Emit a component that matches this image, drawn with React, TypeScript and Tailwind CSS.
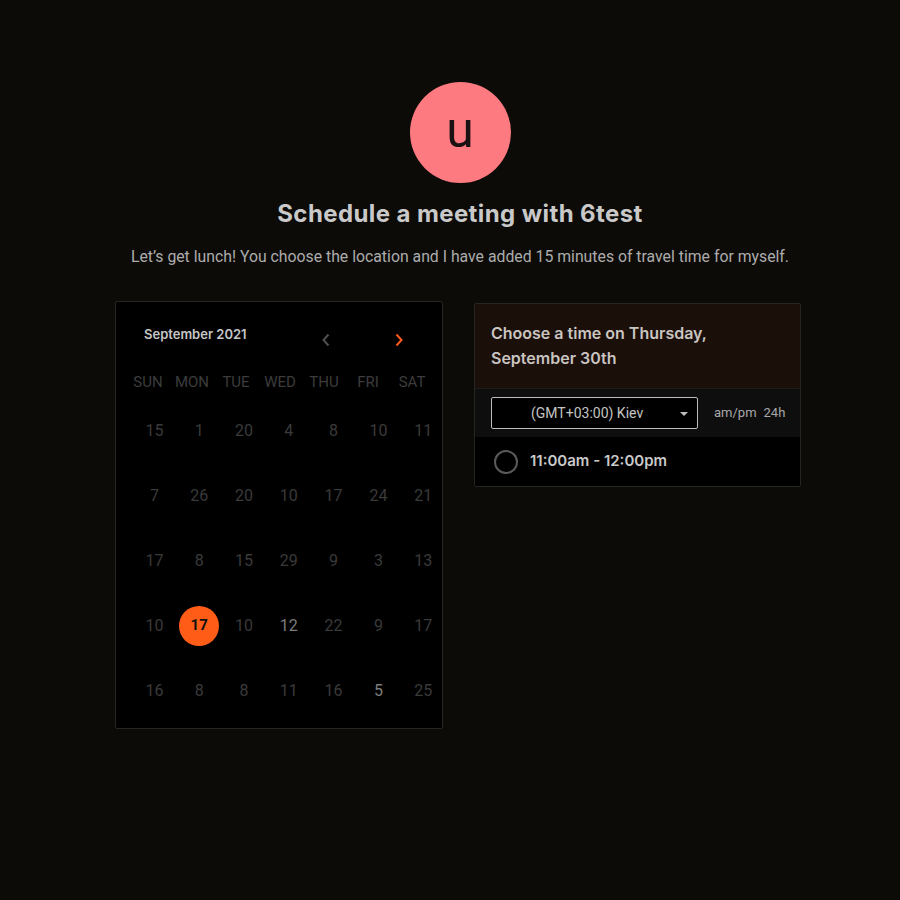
import React from "react";

const headers = ["SUN", "MON", "TUE", "WED", "THU", "FRI", "SAT"];
const rows: (number | string)[][] = [
  [15, 1, 20, 4, 8, 10, 11],
  [7, 26, 20, 10, 17, 24, 21],
  [17, 8, 15, 29, 9, 3, 13],
  [10, 17, 10, 12, 22, 9, 17],
  [16, 8, 8, 11, 16, 5, 25],
];

export default function App() {
  return (
    <div
      className="min-h-[900px] w-full bg-[#0c0b08] flex flex-col items-center pt-[82px] pl-[20px]"
      style={{ fontFamily: "Roboto, 'Liberation Sans', sans-serif" }}
    >
      <div className="w-[101px] h-[101px] rounded-full bg-[#fd7a80] flex items-center justify-center">
        <span className="text-[50px] leading-none text-[#1a1212] pb-[6px]" style={{ fontFamily: "Roboto, sans-serif" }}>u</span>
      </div>
      <h1
        className="mt-[17px] text-[24px] leading-[28px] font-bold text-[#c9c9c9] tracking-[0.4px]"
        style={{ fontFamily: "Inter, 'Liberation Sans', sans-serif" }}
      >
        Schedule a meeting with 6test
      </h1>
      <p className="mt-[18px] text-[15.8px] leading-[22px] text-[#acacac]">
        Let’s get lunch! You choose the location and I have added 15 minutes of travel time for myself.
      </p>

      <div className="mt-[33px] flex items-start gap-[31px] pr-[4px]">
        {/* Calendar */}
        <div className="w-[328px] h-[428px] bg-black border border-[#262522] rounded-[2px] pt-[23px]">
          <div className="flex items-center h-[20px] pl-[28px]">
            <span
              className="text-[13px] font-semibold text-[#c6c6c6] w-[170px]"
              style={{ fontFamily: "Inter, 'Liberation Sans', sans-serif" }}
            >
              September 2021
            </span>
            <svg width="10" height="14" viewBox="0 0 10 14" className="ml-[7px] mt-[10px]">
              <path d="M7.5 1.5 L2.5 7 L7.5 12.5" fill="none" stroke="#4e4e4e" strokeWidth="2" />
            </svg>
            <svg width="10" height="14" viewBox="0 0 10 14" className="ml-[63px] mt-[10px]">
              <path d="M2.5 1.5 L7.5 7 L2.5 12.5" fill="none" stroke="#ff5a1f" strokeWidth="2" />
            </svg>
          </div>
          <div className="grid grid-cols-[repeat(7,44px)] ml-[10px] mt-[26px] h-[20px] items-center">
            {headers.map((h) => (
              <div key={h} className="text-center text-[15px] text-[#3c3c3c]">
                {h}
              </div>
            ))}
          </div>
          <div className="ml-[16px] mt-[7px] w-[314px]">
            {rows.map((r, ri) => (
              <div key={ri} className="grid grid-cols-[repeat(7,44.8px)] h-[65px] items-center">
                {r.map((d, ci) => {
                  const selected = ri === 3 && ci === 1;
                  const bright = (ri === 3 && ci === 3) || (ri === 4 && ci === 5);
                  return (
                    <div key={ci} className="flex items-center justify-center">
                      {selected ? (
                        <div className="w-[40px] h-[40px] rounded-full bg-[#ff5c17] flex items-center justify-center text-[15px] font-bold text-[#111]">
                          {d}
                        </div>
                      ) : (
                        <span
                          className={
                            bright
                              ? "text-[16px] text-[#7c7c7c]"
                              : "text-[16px] text-[#3a3a3a]"
                          }
                        >
                          {d}
                        </span>
                      )}
                    </div>
                  );
                })}
              </div>
            ))}
          </div>
        </div>

        {/* Time panel */}
        <div className="w-[327px] mt-[2px] border border-[#262522] rounded-[2px] overflow-hidden bg-black">
          <div className="bg-[#1b0f0a] h-[84px] pl-[16px] pt-[17px]">
            <div
              className="text-[16px] leading-[25px] font-semibold text-[#c9c4c0] w-[260px]"
              style={{ fontFamily: "Inter, 'Liberation Sans', sans-serif" }}
            >
              Choose a time on Thursday,
              <br />
              September 30th
            </div>
          </div>
          <div className="bg-[#0e0e0e] h-[49px] flex items-center pl-[16px] border-t border-[#1e1e1e]">
            <div className="w-[207px] h-[32px] border border-[#bdbdbd] rounded-[2px] bg-black flex items-center relative">
              <span className="text-[14px] text-[#c4c4c4] ml-[39px]">(GMT+03:00) Kiev</span>
              <svg width="8" height="4" viewBox="0 0 8 4" className="absolute right-[9px] top-[14px]">
                <path d="M0 0 L8 0 L4 4 Z" fill="#bdbdbd" />
              </svg>
            </div>
            <span className="ml-[16px] text-[13px] text-[#a8a8a8]">am/pm</span>
            <span className="ml-[7px] text-[13px] text-[#a8a8a8]">24h</span>
          </div>
          <div className="h-[49px] flex items-center pl-[19px] bg-black">
            <div className="w-[24px] h-[24px] rounded-full border-2 border-[#5a5a5a]" />
            <span
              className="ml-[12px] text-[15px] font-semibold text-[#c9c9c9]"
              style={{ fontFamily: "Inter, 'Liberation Sans', sans-serif" }}
            >
              11:00am - 12:00pm
            </span>
          </div>
        </div>
      </div>
    </div>
  );
}
